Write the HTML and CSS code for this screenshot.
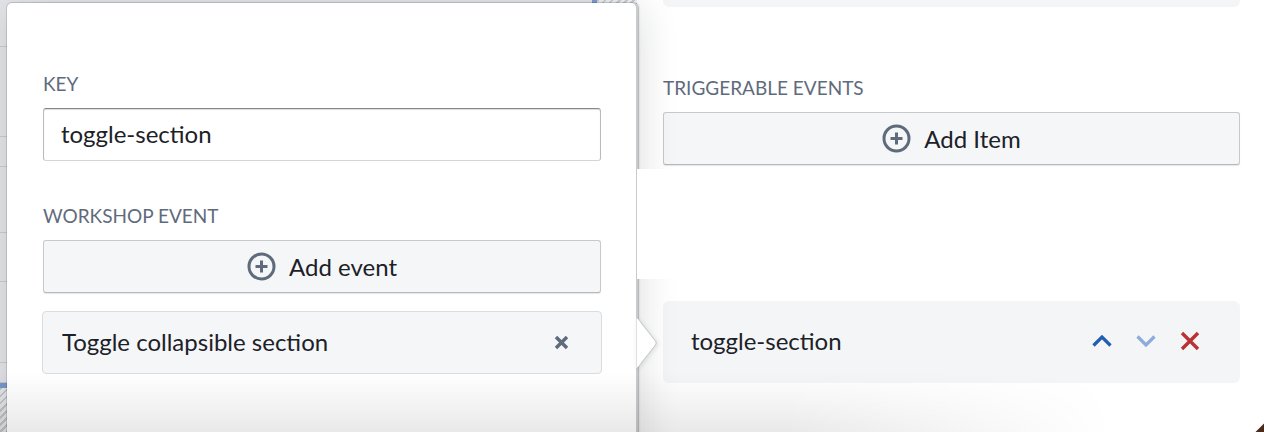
FILE: index.html
```html
<!DOCTYPE html>
<html lang="en">
<head>
<meta charset="utf-8">
<title>Workshop event popover</title>
<link rel="stylesheet" href="styles.css">
</head>
<body>
<div class="app">
  <div class="backdrop">
    <div class="bg-rows">
      <div class="bg-row r1"></div>
      <div class="bg-row r2"></div>
      <div class="bg-row r3"></div>
      <div class="bg-row r4"></div>
      <div class="bg-row r5"></div>
      <div class="bg-row r6"></div>
      <div class="bg-row r7"></div>
      <div class="bg-sel-row"></div>
      <div class="bg-hatch-row"></div>
    </div>
    <div class="bg-sel-col"></div>
    <div class="bg-hatch-col"></div>

    <div class="popover">
      <div class="field">
        <div class="field-label">KEY</div>
        <div class="text-input">toggle-section</div>
      </div>
      <div class="field field-event">
        <div class="field-label">WORKSHOP EVENT</div>
        <div class="button">
          <svg class="add-icon" viewBox="0 0 29 29" width="29" height="29"><circle cx="14.5" cy="14.5" r="12.5" fill="none" stroke="#5f6b7c" stroke-width="3"/><path d="M14.5 8.5v12M8.5 14.5h12" stroke="#5f6b7c" stroke-width="3"/></svg>
          <span>Add event</span>
        </div>
        <div class="event-item">
          <span>Toggle collapsible section</span>
          <svg class="small-x" viewBox="0 0 15 15" width="15" height="15"><path d="M2 2l11 11M13 2L2 13" stroke="#5f6b7c" stroke-width="3.4"/></svg>
        </div>
      </div>
      <svg class="arrow" viewBox="0 0 22 52" width="22" height="52"><path d="M0.5 0.5C2.5 2 4 4 6 7L19.5 24Q21 26 19.5 28L6 45C4 48 2.5 50 0.5 51.5" fill="#fff" stroke="#c4c6c9" stroke-width="1"/></svg>
    </div>
  </div>

  <div class="side">
    <div class="card-tail"></div>
    <section class="side-top">
      <div class="field-label">TRIGGERABLE EVENTS</div>
      <div class="button">
        <svg class="add-icon" viewBox="0 0 29 29" width="29" height="29"><circle cx="14.5" cy="14.5" r="12.5" fill="none" stroke="#5f6b7c" stroke-width="3"/><path d="M14.5 8.5v12M8.5 14.5h12" stroke="#5f6b7c" stroke-width="3"/></svg>
        <span>Add Item</span>
      </div>
    </section>
    <div class="side-gap"></div>
    <section class="side-bottom">
      <div class="event-card">
        <span class="event-key">toggle-section</span>
        <div class="card-actions">
          <span class="act"><svg viewBox="0 0 20 12" width="20" height="12"><path d="M1.5 10.5L10 2l8.5 8.5" fill="none" stroke="#215db0" stroke-width="3.2"/></svg></span>
          <span class="act"><svg viewBox="0 0 20 12" width="20" height="12"><path d="M1.5 1.5L10 10l8.5-8.5" fill="none" stroke="#8eabd9" stroke-width="3.2"/></svg></span>
          <span class="act"><svg viewBox="0 0 20 20" width="20" height="20"><path d="M2 2l16 16M18 2L2 18" stroke="#b83236" stroke-width="3.4"/></svg></span>
        </div>
      </div>
    </section>
  </div>

  <div class="bottom-shade"></div>
  <div class="corner-mark"></div>
</div>
</body>
</html>
```

FILE: styles.css
```css
* { box-sizing: border-box; }
html, body { margin: 0; padding: 0; }
body {
  background: #fff;
  font-family: "Lato", "Open Sans", sans-serif;
  color: #1c2127;
  overflow: hidden;
}
.app {
  position: relative;
  width: 1264px;
  height: 432px;
  display: flex;
  overflow: hidden;
}

/* background workspace, mostly hidden behind the popover */
.backdrop {
  position: relative;
  width: 637px;
  height: 432px;
  flex: none;
  display: grid;
  grid-template-columns: 592px 5px 40px;
  background: #e5e7ea;
}
.bg-rows { display: flex; flex-direction: column; }
.bg-row { border-bottom: 1px solid #c9ccd1; flex: none; }
.r1 { height: 47px; }
.r2 { height: 90px; }
.r3 { height: 30px; }
.r4 { height: 66px; }
.r5 { height: 49px; }
.r6 { height: 81px; }
.r7 { height: 20px; }
.bg-sel-row { height: 5px; background: #7d9dd2; flex: none; }
.bg-hatch-row, .bg-hatch-col {
  flex: 1;
  background: repeating-linear-gradient(135deg, #c9cbcf 0 2px, #eef0f2 2px 5px);
}
.bg-sel-col { background: #7d9dd2; }

/* popover */
.popover {
  position: absolute;
  left: 7px;
  top: 3px;
  width: 631px;
  height: 470px;
  background: #fff;
  border-radius: 5px;
  padding: 69px 37px 0 36px;
  z-index: 1;
  box-shadow: inset -2px 0 0 #c9cacc, 0 0 0 1px rgba(16, 22, 26, 0.12), 1px 0 2px rgba(16, 22, 26, 0.18), 0 4px 40px rgba(16, 22, 26, 0.16);
}
.field { display: flex; flex-direction: column; }
.field-event { margin-top: 43px; }
.field-label {
  font-size: 19px;
  line-height: 24px;
  color: #5f6b7c;
  margin-bottom: 12px;
}
.text-input {
  height: 53px;
  display: flex;
  align-items: center;
  padding: 0 0 2px 17px;
  font-size: 24px;
  border: 1px solid;
  border-color: #84888d #b7babe #d3d5d8;
  border-radius: 3px;
  box-shadow: inset 0 1px 1px rgba(16, 22, 26, 0.15);
  background: #fff;
}
.button {
  height: 53px;
  display: flex;
  align-items: center;
  justify-content: center;
  gap: 13px;
  padding-bottom: 1px;
  font-size: 24px;
  background: #f5f6f8;
  border: 1px solid #c7c9cd;
  border-bottom-color: #b5b8bc;
  border-radius: 3px;
  box-shadow: 0 1px 1px rgba(16, 22, 26, 0.1);
}
.add-icon { flex: none; display: block; }
.event-item {
  margin-top: 18px;
  height: 63px;
  margin-left: -1px;
  margin-right: -1px;
  display: flex;
  align-items: center;
  justify-content: space-between;
  padding: 0 32px 2px 19px;
  font-size: 24px;
  background: #f5f6f8;
  border: 1px solid #dadcdf;
  border-radius: 4px;
}
.small-x { display: block; flex: none; margin-top: 2px; }
.arrow {
  position: absolute;
  left: 629px;
  top: 314px;
  display: block;
  filter: drop-shadow(1px 1px 2px rgba(16, 22, 26, 0.12));
}

/* right panel */
.side {
  flex: 1;
  display: flex;
  flex-direction: column;
  padding: 0 24px 0 26px;
}
.card-tail {
  height: 7px;
  background: #f4f5f7;
  border-radius: 0 0 6px 6px;
  flex: none;
}
.side-top {
  display: flex;
  flex-direction: column;
  padding: 69px 0 4px;
}
.side-gap {
  position: relative;
  z-index: 3;
  height: 110px;
  margin: 0 -24px 0 -26px;
  background: #fff;
  flex: none;
}
.side-bottom { padding-top: 22px; }
.event-card {
  height: 82px;
  display: flex;
  align-items: center;
  justify-content: space-between;
  padding: 0 28px 3px 28px;
  background: #f4f5f7;
  border-radius: 6px;
  font-size: 24px;
}
.card-actions { display: flex; align-items: center; margin-top: 1px; }
.act {
  width: 44px;
  height: 30px;
  display: flex;
  align-items: center;
  justify-content: center;
}
.act svg { display: block; }

/* overlays */
.bottom-shade {
  position: absolute;
  left: 0;
  top: 372px;
  width: 1264px;
  height: 60px;
  z-index: 5;
  pointer-events: none;
  background: linear-gradient(to bottom, rgba(0, 0, 0, 0), rgba(0, 0, 0, 0.085));
  -webkit-mask-image: linear-gradient(to right, #000 0, #000 62%, transparent 88%);
  mask-image: linear-gradient(to right, #000 0, #000 62%, transparent 88%);
}
.corner-mark {
  position: absolute;
  right: -6px;
  bottom: -6px;
  width: 12px;
  height: 12px;
  transform: rotate(45deg);
  background: #4a2a1c;
  z-index: 6;
}
```
